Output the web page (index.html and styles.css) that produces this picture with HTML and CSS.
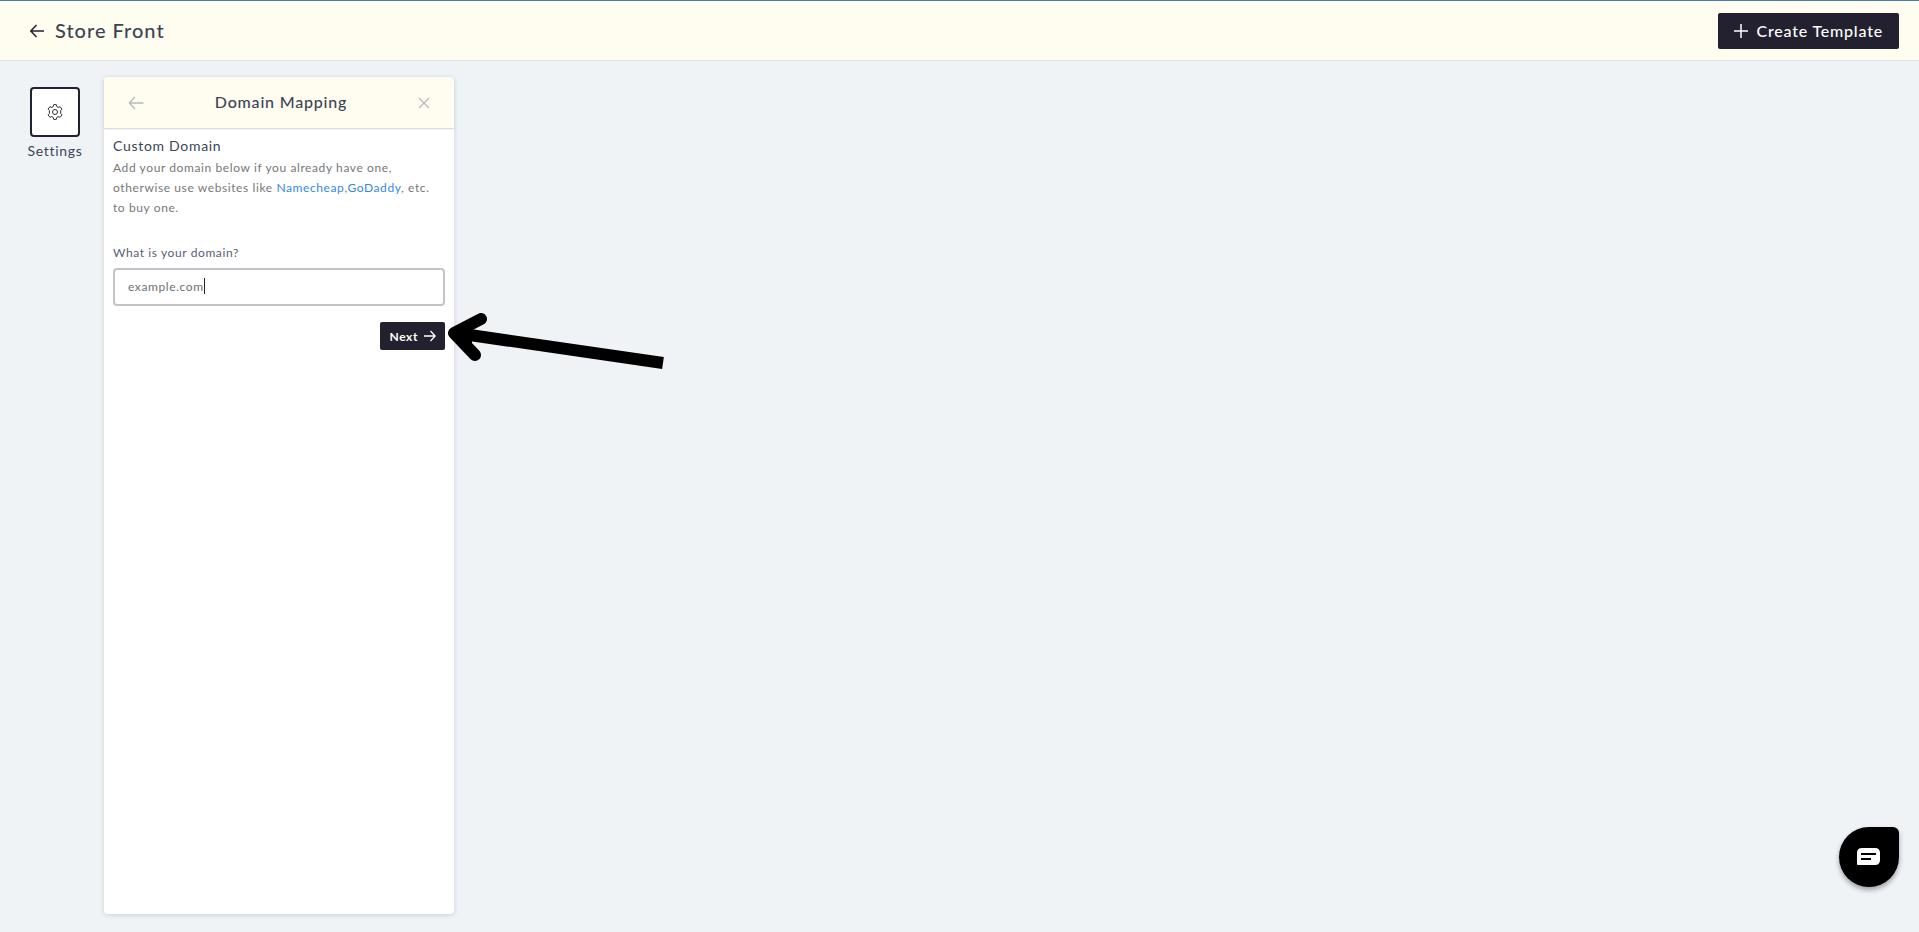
FILE: index.html
```html
<!DOCTYPE html>
<html lang="en">
<head>
<meta charset="utf-8">
<meta name="viewport" content="width=device-width, initial-scale=1">
<title>Store Front</title>
<link rel="stylesheet" href="styles.css">
</head>
<body>
<header class="topbar">
  <div class="topbar-title">
    <button class="icon-button" type="button" aria-label="Back">
      <svg width="16" height="16" viewBox="0 0 16 16" fill="none" stroke="currentColor" stroke-width="1.5"><path d="M15 8H2M7.5 2 1.8 8l5.700 6"/></svg>
    </button>
    <h1>Store Front</h1>
  </div>
  <button class="create-button" type="button">
    <svg width="14" height="14" viewBox="0 0 14 14" fill="none" stroke="currentColor" stroke-width="1.5"><path d="M7 0v14M0 7h14"/></svg>
    <span>Create Template</span>
  </button>
</header>
<main class="workspace">
  <nav class="sidebar">
    <button class="settings-button" type="button" aria-labelledby="settings-label">
      <svg width="16" height="16" viewBox="0 0 16 16" fill="none" stroke="currentColor" stroke-width="1" stroke-linejoin="round"><circle cx="8" cy="8" r="2.500"/><path d="M6.700.6h2.600l.5 2 1.300.8 2-.7 1.900 2.400-1.400 1.500v2.800l1.400 1.500-1.900 2.400-2-.7-1.300.8-.5 2H6.700l-.5-2-1.300-.8-2 .7L1 10.900l1.400-1.500V6.600L1 5.100l1.900-2.400 2 .7 1.300-.8z"/></svg>
    </button>
    <span class="settings-label" id="settings-label">Settings</span>
  </nav>
  <section class="panel">
    <header class="panel-header">
      <button class="icon-button muted" type="button" aria-label="Back">
        <svg width="16" height="14" viewBox="0 0 16 14" fill="none" stroke="currentColor" stroke-width="1.300"><path d="M15.500 7H1.500M7 1 1.300 7 7 13"/></svg>
      </button>
      <h2>Domain Mapping</h2>
      <button class="icon-button muted" type="button" aria-label="Close">
        <svg width="12" height="12" viewBox="0 0 12 12" fill="none" stroke="currentColor" stroke-width="1.300"><path d="m1 1 10 10M11 1 1 11"/></svg>
      </button>
    </header>
    <form class="panel-body">
      <h3>Custom Domain</h3>
      <p class="description">Add your domain below if you already have one, otherwise use websites like <a href="#">Namecheap</a>,<a href="#">GoDaddy</a>, etc. to buy one.</p>
      <label for="domain">What is your domain?</label>
      <div class="field">
        <input id="domain" type="text" value="example.com">
        <span class="caret"></span>
      </div>
      <button class="next-button" type="button">
        <span>Next</span>
        <svg width="12" height="12" viewBox="0 0 12 12" fill="none" stroke="currentColor" stroke-width="1.300"><path d="M0 6h11M6.500 1l4.700 5-4.700 5"/></svg>
      </button>
    </form>
  </section>
</main>
<svg class="pointer" width="220" height="58" viewBox="0 0 220 58" fill="none" stroke="#000" stroke-width="12"><path d="M8 20 215 50"/><path d="M33 6 6 20 27 42" stroke-linecap="round" stroke-linejoin="round"/><path d="M4 20 24 13v18z" fill="#000" stroke="none"/></svg>
<button class="chat-button" type="button" aria-label="Open chat">
  <svg width="24" height="18" viewBox="0 0 24 18"><path d="M5 0h13q5 0 5 5v7q0 5-5 5H1q-1 0-1-1V5q0-5 5-5z" fill="#fff"/><path d="M4 6h15M4 11h10" stroke="#000" stroke-width="2"/></svg>
</button>
</body>
</html>
```
FILE: styles.css
```css
* { box-sizing: border-box; }
body {
  margin: 0;
  min-height: 100vh;
  display: flex;
  flex-direction: column;
  background: #eff3f6;
  color: #3b4556;
  font-family: Lato, "Open Sans", sans-serif;
}
body, h1, h2, h3, p, label, button, input, .settings-label { letter-spacing: 0.05em; }
h1, h2, h3, p { margin: 0; }
button { font: inherit; border: 0; padding: 0; display: flex; align-items: center; justify-content: center; cursor: pointer; }
svg { display: block; flex: none; }
.topbar {
  height: 61px;
  display: flex;
  align-items: center;
  justify-content: space-between;
  padding: 0 20px 0 29px;
  background: #fffcf0;
  border-top: 1px solid #4a7ab5;
  border-bottom: 1px solid #dfe4ec;
}
.topbar-title { display: flex; align-items: center; gap: 10px; }
.topbar h1 { padding-bottom: 2px; font-size: 20px; line-height: 28px; font-weight: 500; }
.icon-button { background: none; color: #232030; }
.muted { color: #b9b9bf; }
.create-button {
  height: 36px;
  padding: 0 16px;
  gap: 9px;
  border-radius: 2px;
  background: #232130;
  color: #fff;
  font-size: 16px;
  font-weight: 500;
}
.workspace { flex: 1; display: flex; padding: 16px 24px 18px; gap: 18px; }
.sidebar { width: 62px; padding-top: 10px; display: flex; flex-direction: column; align-items: center; gap: 5px; }
.settings-button { width: 50px; height: 50px; border: 2px solid #232130; border-radius: 4px; background: #fff; color: #333; }
.settings-label { font-size: 14px; line-height: 18px; }
.panel { width: 350px; display: flex; flex-direction: column; background: #fff; border-radius: 4px; box-shadow: 0 1px 5px #c9cfdf; }
.panel-header {
  height: 51px;
  padding: 0 24px;
  display: flex;
  align-items: center;
  justify-content: space-between;
  background: #fffcf0;
  border-radius: 4px 4px 0 0;
  box-shadow: 0 1px 2px #d2d0d4;
}
.panel-header h2 { padding-bottom: 2px; font-size: 16px; line-height: 24px; font-weight: 500; }
.panel-body { display: flex; flex-direction: column; padding: 8px 9px; }
.panel-body h3 { font-size: 14px; line-height: 20px; font-weight: 400; }
.description { margin-top: 2px; color: #777; font-size: 12px; line-height: 20px; }
.description a { color: #3388ec; text-decoration: none; }
.panel-body label { margin-top: 25px; color: #566173; font-size: 12px; line-height: 20px; }
.field { position: relative; margin-top: 5px; }
.field input {
  display: block;
  width: 100%;
  height: 38px;
  padding: 0 13px 2px;
  border: 2px solid #c4c3ca;
  border-radius: 4px;
  background: #fff;
  color: #707070;
  font: inherit;
  font-size: 12px;
}
.caret { position: absolute; left: 91px; top: 10px; width: 1px; height: 16px; background: #222; }
.next-button { align-self: flex-end; height: 28px; margin-top: 16px; padding: 0 9px; gap: 6px; border-radius: 2px; background: #232130; color: #fff; font-size: 12px; font-weight: 700; }
.pointer { position: absolute; left: 448px; top: 313px; }
.chat-button { position: fixed; right: 20px; bottom: 45px; width: 60px; height: 60px; border-radius: 30px 6px 30px 30px; background: #000; box-shadow: 0 3px 5px #9da0a4; }
```
